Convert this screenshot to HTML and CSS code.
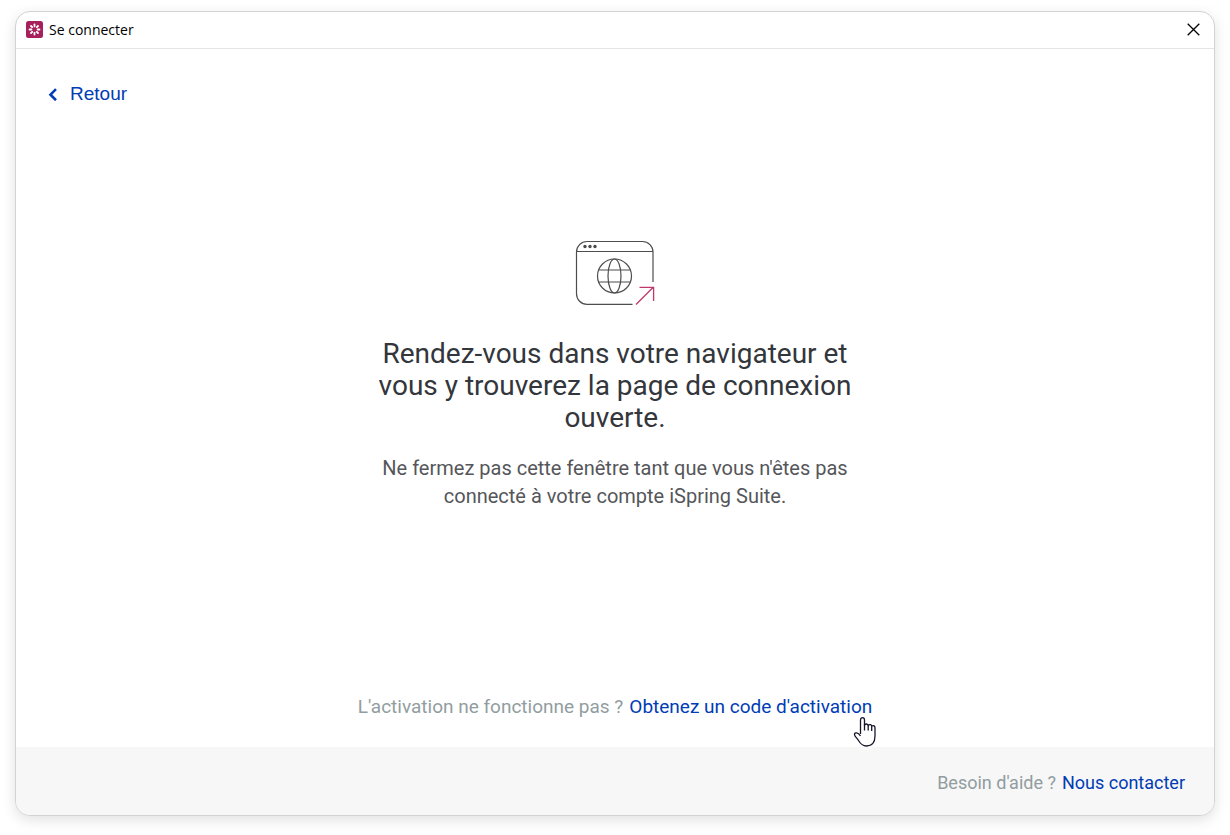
FILE: index.html
```html
<!DOCTYPE html>
<html lang="fr">
<head>
    <meta charset="UTF-8">
    <meta name="viewport" content="width=device-width, initial-scale=1.0">
    <title>Se connecter</title>
    <link rel="stylesheet" href="styles.css">
</head>
<body>
    <div class="window">
        <header class="title-bar">
            <svg class="app-icon" viewBox="0 0 17 17" aria-hidden="true">
                <rect width="17" height="17" rx="2.500" fill="#a6205c"/>
                <g stroke="#fff" stroke-width="1.8" stroke-linecap="round">
                    <line x1="8.5" y1="3.5" x2="8.5" y2="5.4"/>
                    <line x1="12" y1="5" x2="10.8" y2="6.2"/>
                    <line x1="13.5" y1="8.5" x2="11.6" y2="8.5"/>
                    <line x1="12" y1="12" x2="10.8" y2="10.8"/>
                    <line x1="8.5" y1="13.5" x2="8.5" y2="11.6"/>
                    <line x1="5" y1="12" x2="6.2" y2="10.8"/>
                    <line x1="3.5" y1="8.5" x2="5.4" y2="8.5"/>
                    <line x1="5" y1="5" x2="6.2" y2="6.2"/>
                </g>
            </svg>
            <span class="title">Se connecter</span>
            <button class="close-btn" type="button" aria-label="Fermer">
                <svg width="13" height="13" viewBox="0 0 13 13">
                    <path d="M.7.7l11.6 11.6M12.3.7L.7 12.3" stroke="#000" stroke-width="1.3"/>
                </svg>
            </button>
        </header>

        <nav class="nav">
            <a class="back-link" href="#">
                <svg width="10" height="14" viewBox="0 0 10 14" aria-hidden="true">
                    <path d="M8 2.200L2.500 7.700L8 13.200" fill="none" stroke="#003cb4" stroke-width="2.6"/>
                </svg>
                Retour
            </a>
        </nav>

        <main class="content">
            <!-- Browser window with globe and arrow -->
            <svg class="browser-icon" width="80" height="66" viewBox="0 0 80 66" fill="none" aria-hidden="true">
                <g stroke="#4d4d4f" stroke-width="1.2">
                    <path d="M57.500 64.300H12A10.500 10.500 0 0 1 1.500 53.800V12A10.500 10.500 0 0 1 12 1.500H67.500A10.500 10.500 0 0 1 78 12V42"/>
                    <path d="M1.500 11.500H78"/>
                    <circle cx="39.500" cy="36" r="17"/>
                    <ellipse cx="39.500" cy="36" rx="6.500" ry="17"/>
                    <path d="M23.800 30H55.200M23.800 42H55.200"/>
                </g>
                <g fill="#4d4d4f">
                    <circle cx="10" cy="6.500" r="1.700"/>
                    <circle cx="15" cy="6.500" r="1.700"/>
                    <circle cx="20" cy="6.500" r="1.700"/>
                </g>
                <path d="M61 64.500L78.500 47M64.500 47.300H78.600V61" stroke="#c0396b" stroke-width="1.300"/>
            </svg>
            <h1 class="heading">Rendez-vous dans votre navigateur et vous y trouverez la page de connexion ouverte.</h1>
            <p class="description">Ne fermez pas cette fenêtre tant que vous n'êtes pas connecté à votre compte iSpring Suite.</p>
        </main>

        <p class="activation">
            <span>L'activation ne fonctionne pas ?</span>
            <a class="activation-link" href="#">Obtenez un code d'activation
                <svg class="cursor" width="24" height="32" viewBox="0 0 24 32" aria-hidden="true">
                    <path d="M7.500 18V4C7.500 .9 11.500 .9 11.500 4V9C13.300 7.300 15 8 15.200 9.300C17 8 18.500 8.800 18.700 10C20.700 9 22 10 22 12V20C22 26.500 19 30 13.500 30C9.500 30 7.500 28 5.500 24.500C4 22 1.500 20.500 1.500 18.500C1.500 16 5 16 7.500 20" fill="#fff" stroke="#15152a" stroke-width="1.300" stroke-linejoin="round"/>
                    <path d="M11.500 8V14.500M15.200 9V14.500M18.700 10V15" stroke="#15152a" stroke-width="1.300"/>
                </svg>
            </a>
        </p>

        <footer class="footer">
            <span>Besoin d'aide ?</span>
            <a href="#">Nous contacter</a>
        </footer>
    </div>
</body>
</html>
```
FILE: styles.css
```css
* {
    box-sizing: border-box;
}

body {
    margin: 0;
    padding: 11px 15px 19px;
    min-height: 100vh;
    display: flex;
    background-color: #fff;
    font-family: Roboto, "Liberation Sans", sans-serif;
    color: #33363b;
}

a {
    color: #003cb4;
    text-decoration: none;
}

.window {
    flex: 1;
    display: flex;
    flex-direction: column;
    background-color: #fff;
    border: 1px solid #d2d2d2;
    border-radius: 15px;
    box-shadow: 0 4px 14px rgba(0, 0, 0, 0.12);
    overflow: hidden;
}

.title-bar {
    display: flex;
    align-items: center;
    gap: 6px;
    height: 37px;
    padding: 0 10px 2px;
    border-bottom: 1px solid #e5e5e5;
    font-family: "Open Sans", "Noto Sans", sans-serif;
    font-size: 14px;
    color: #000;
}

.app-icon {
    width: 17px;
    height: 17px;
}

.close-btn {
    display: flex;
    margin-left: auto;
    padding: 4px;
    border: none;
    background: none;
    cursor: pointer;
}

.nav {
    padding: 33px 32px 32px;
}

.back-link {
    display: inline-flex;
    align-items: center;
    gap: 12px;
    font-family: "Liberation Sans", Arial, sans-serif;
    font-size: 19px;
    line-height: 24px;
}

.content {
    flex: 1;
    display: flex;
    flex-direction: column;
    align-items: center;
    padding: 102px 24px 24px;
    text-align: center;
}

.heading {
    max-width: 480px;
    margin: 32px 0 20px;
    font-size: 28px;
    font-weight: 400;
    line-height: 32px;
}

.description {
    max-width: 480px;
    margin: 0;
    font-size: 20px;
    line-height: 28px;
    color: #55565a;
}

.activation {
    display: flex;
    flex-wrap: wrap;
    justify-content: center;
    gap: 6px;
    margin: 0;
    padding: 0 24px 28px;
    font-size: 19px;
    line-height: 24px;
    color: #919da0;
}

.activation-link {
    position: relative;
}

/* Hand pointer over the end of the link */
.cursor {
    position: absolute;
    top: 21px;
    right: -5px;
}

.footer {
    display: flex;
    justify-content: flex-end;
    align-items: center;
    gap: 6px;
    height: 68px;
    padding: 4px 29px 0;
    background-color: #f7f7f7;
    font-size: 18px;
    line-height: 24px;
    color: #919da0;
}
```
